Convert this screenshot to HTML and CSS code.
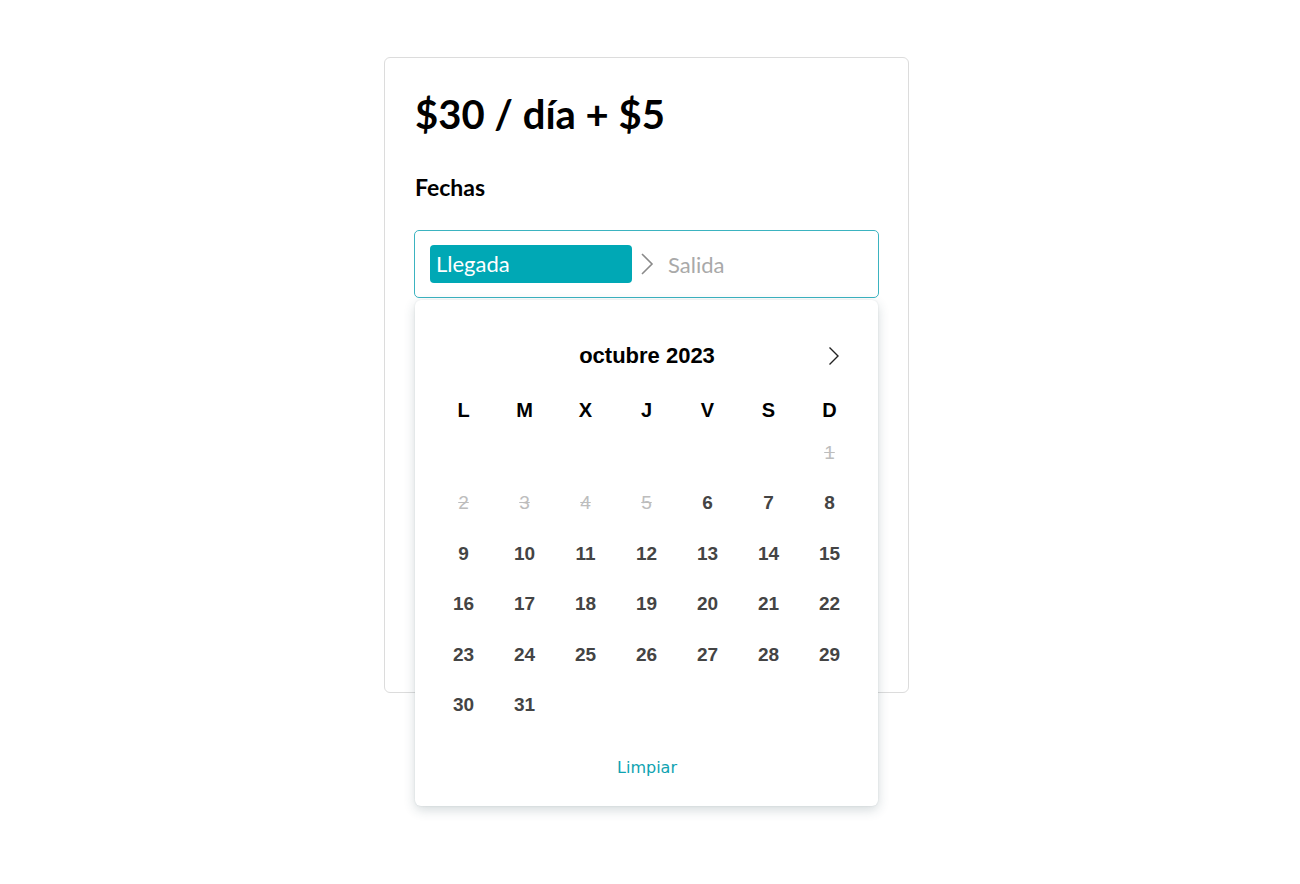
FILE: index.html
```html
<!DOCTYPE html>
<html lang="es">
<head>
<meta charset="utf-8">
<title>Reserva</title>
<link rel="stylesheet" href="styles.css">
</head>
<body>
<div class="card">
  <h1 class="price">$30 / día + $5</h1>
  <h2 class="label">Fechas</h2>
  <div class="picker">
    <div class="range">
      <span class="chip">Llegada</span>
      <svg class="sep" width="14" height="24" viewBox="0 0 14 24"><polyline points="2,2 12,12 2,22" fill="none" stroke="#8a8a8a" stroke-width="1.6"/></svg>
      <span class="placeholder">Salida</span>
    </div>
    <div class="popup">
      <div class="month">
        <span></span>
        <span class="month-title">octubre 2023</span>
        <svg class="next" width="12" height="20" viewBox="0 0 12 20"><polyline points="1.5,1.5 10,10 1.5,18.5" fill="none" stroke="#222" stroke-width="1.4"/></svg>
      </div>
      <div class="weekdays">
        <span>L</span><span>M</span><span>X</span><span>J</span><span>V</span><span>S</span><span>D</span>
      </div>
      <div class="days">
        <span></span><span></span><span></span><span></span><span></span><span></span><span class="off">1</span>
        <span class="off">2</span><span class="off">3</span><span class="off">4</span><span class="off">5</span><span>6</span><span>7</span><span>8</span>
        <span>9</span><span>10</span><span>11</span><span>12</span><span>13</span><span>14</span><span>15</span>
        <span>16</span><span>17</span><span>18</span><span>19</span><span>20</span><span>21</span><span>22</span>
        <span>23</span><span>24</span><span>25</span><span>26</span><span>27</span><span>28</span><span>29</span>
        <span>30</span><span>31</span>
      </div>
      <div class="clear">Limpiar</div>
    </div>
  </div>
</div>
</body>
</html>
```
FILE: styles.css
```css
* { box-sizing: border-box; }
html, body { margin: 0; padding: 0; background: #fff; }
body {
  font-family: "Lato", "Noto Sans", sans-serif;
  color: #000;
  min-height: 884px;
  padding-top: 57px;
}

.card {
  width: 525px;
  height: 636px;
  margin: 0 0 0 384px;
  border: 1px solid #dcdcdc;
  border-radius: 6px;
  padding: 28px 29px 0 29px;
}

.price {
  margin: 0 0 0 1px;
  font-size: 40px;
  font-weight: 700;
  line-height: 56px;
  letter-spacing: 0;
}

.label {
  margin: 30px 0 0 1px;
  font-size: 23px;
  font-weight: 700;
  line-height: 30px;
}

.picker {
  position: relative;
  margin-top: 28px;
}

.range {
  height: 68px;
  border: 1px solid #3bb3c0;
  border-radius: 5px;
  padding: 0 15px;
  display: flex;
  align-items: center;
}

.chip {
  width: 202px;
  height: 38px;
  background: #00a8b5;
  color: #fff;
  border-radius: 4px;
  font-size: 22px;
  line-height: 38px;
  padding-left: 6px;
}

.sep { margin: 0 14px 0 8px; }

.placeholder {
  color: #a9a9a9;
  font-size: 22px;
}

.popup {
  position: absolute;
  left: 1px;
  top: 70px;
  width: 463px;
  height: 506px;
  background: #fff;
  border-radius: 6px;
  box-shadow: 0 4px 12px rgba(40, 70, 80, 0.2), 0 0 2px rgba(40, 70, 80, 0.12);
  padding: 36px 17px 0 18px;
  font-family: "Liberation Sans", Arial, sans-serif;
  z-index: 2;
}

.month {
  height: 40px;
  display: grid;
  grid-template-columns: 1fr auto 1fr;
  align-items: center;
}

.month-title {
  font-size: 22px;
  font-weight: 700;
  color: #000;
}

.next { justify-self: end; margin-right: 21px; }

.weekdays, .days {
  display: grid;
  grid-template-columns: repeat(7, 61px);
}

.weekdays {
  margin-top: 18px;
  height: 32px;
}

.days { margin-top: 2px; }

.weekdays span {
  text-align: center;
  font-size: 20px;
  font-weight: 700;
  line-height: 32px;
  color: #000;
}

.days span {
  height: 50.4px;
  line-height: 50.4px;
  text-align: center;
  font-size: 19px;
  font-weight: 700;
  color: #444;
}

.days span.off {
  color: #bdbdbd;
  font-weight: 400;
  text-decoration: line-through;
}

.clear {
  margin-top: 26px;
  text-align: center;
  font-family: "DejaVu Sans", Verdana, sans-serif;
  font-size: 16px;
  line-height: 24px;
  color: #0fa3b1;
}
```
